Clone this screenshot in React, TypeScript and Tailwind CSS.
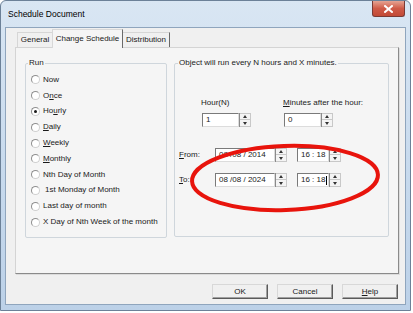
import React from "react";

const FONT = "font-['Liberation_Sans',Arial,sans-serif]";

function U({ children }: { children: React.ReactNode }) {
  return <span className="underline underline-offset-[1px]">{children}</span>;
}

function Radio({ checked, children, extra }: { checked?: boolean; children: React.ReactNode; extra?: string }) {
  return (
    <div className="flex h-[15.8px] items-center">
      <div className="relative ml-[5px] flex h-[9px] w-[9px] items-center justify-center rounded-full border border-[#8f8f8f] border-r-[#d0d0d0] border-b-[#d0d0d0] bg-white">
        {checked && <div className="h-[3px] w-[3px] rounded-full bg-[#1a1a1a]" />}
      </div>
      <span className={"ml-[3px] " + (extra ?? "")}>{children}</span>
    </div>
  );
}

function Spinner() {
  return (
    <div className="flex h-[14px] w-[12px] flex-col border-l border-[#8a8a8a]">
      <div className="flex h-[7px] items-center justify-center border border-[#c8c8c8] border-l-0 bg-[#f4f4f4]">
        <svg width="4" height="3" viewBox="0 0 4 3"><path d="M0 3 L2 0 L4 3 Z" fill="#333" /></svg>
      </div>
      <div className="flex h-[7px] items-center justify-center border border-t-0 border-l-0 border-[#c8c8c8] bg-[#f4f4f4]">
        <svg width="4" height="3" viewBox="0 0 4 3"><path d="M0 0 L2 3 L4 0 Z" fill="#333" /></svg>
      </div>
    </div>
  );
}

function Field({ w, value, caret }: { w: string; value: string; caret?: boolean }) {
  return (
    <div className="flex items-center">
      <div className={"flex h-[14px] items-center border border-[#7a7a7a] border-r-[#dcdcdc] border-b-[#dcdcdc] bg-white pl-[3px] " + w}>
        <span className="whitespace-pre leading-none">{value}</span>
        {caret && <span className="ml-[1px] h-[9px] w-[1px] bg-black" />}
      </div>
      <Spinner />
    </div>
  );
}

function Btn({ children }: { children: React.ReactNode }) {
  return (
    <div className="flex h-[15px] w-[56px] items-center justify-center border border-[#d8d8d8] border-r-[#5a5a5a] border-b-[#5a5a5a] bg-[#f0f0f0] shadow-[inset_-1px_-1px_0_#a0a0a0]">
      {children}
    </div>
  );
}

export default function App() {
  return (
    <div className={"relative h-[313px] w-[413px] bg-white text-[8px] text-[#1a1a1a] " + FONT}>
      <div className="flex h-[311px] w-[411px] flex-col rounded-t-[6px] border border-[#6c8198] bg-gradient-to-b from-[#d9e6f3] via-[#c9dbee] to-[#bcd1e8]">
        {/* Title bar */}
        <div className="flex h-[26px] items-start">
          <span className="ml-[7px] mt-[7px] text-[8.5px] text-black">Schedule Document</span>
          <div className="ml-auto mr-[5px] flex h-[16px] w-[33px] items-center justify-center rounded-b-[3px] border border-t-0 border-[#7a3a34] bg-gradient-to-b from-[#e4a393] via-[#cf5a47] to-[#c24a36]">
            <svg width="9" height="8" viewBox="0 0 9 8">
              <path d="M1 1 L8 7 M8 1 L1 7" stroke="#ffffff" strokeWidth="2" strokeLinecap="square" />
            </svg>
          </div>
        </div>
        {/* Client */}
        <div className="mx-[4px] flex flex-1 flex-col border border-[#8fa5bd] bg-[#f0f0f0] pl-[9px] pr-[6px] pt-[1px]">
          {/* Tabs */}
          <div className="flex h-[18px] items-end pl-[2px]">
            <div className="flex h-[15px] w-[35px] items-center justify-center border border-b-0 border-[#d6d6d6] border-r-0 bg-[#f0f0f0]">General</div>
            <div className="relative z-10 -mb-[1px] flex h-[19px] w-[71px] items-center justify-center border border-b-0 border-[#d8d8d8] border-r-[#6a6a6a] bg-[#f5f5f5]">Change Schedule</div>
            <div className="flex h-[15px] w-[47px] items-center justify-center border border-b-0 border-l-0 border-[#d6d6d6] border-r-[#6a6a6a] bg-[#f0f0f0]">Distribution</div>
          </div>
          {/* Panel */}
          <div className="flex h-[227px] gap-[7px] border border-[#d4d4d4] border-r-[#8a8a8a] border-b-[#8a8a8a] bg-[#f5f5f5] pl-[9px] pt-[10px] shadow-[1px_1px_0_#dcdcdc]">
            <fieldset className="h-[180px] w-[142px] rounded-[2px] border border-[#cfd6dc] pl-[0px]">
              <legend className="ml-[2px] px-[1px] leading-[10px]">Run</legend>
              <div className="flex flex-col pt-[4px]">
                <Radio>Now</Radio>
                <Radio>O<U>n</U>ce</Radio>
                <Radio checked>Ho<U>u</U>rly</Radio>
                <Radio><U>D</U>aily</Radio>
                <Radio><U>W</U>eekly</Radio>
                <Radio><U>M</U>onthly</Radio>
                <Radio>Nth Day of Month</Radio>
                <Radio extra="ml-[5px]">1st Monday of Month</Radio>
                <Radio>Last day of month</Radio>
                <Radio>X Day of Nth Week of the month</Radio>
              </div>
            </fieldset>
            <fieldset className="h-[179px] w-[215px] rounded-[2px] border border-[#cfd6dc]">
              <legend className="ml-[3px] px-[1px] leading-[10px]">Object will run every N hours and X minutes.</legend>
              <div className="flex pl-[26px] pt-[30px]">
                <div className="flex w-[82px] flex-col">
                  <span className="leading-[10px]">Hour(N)</span>
                  <div className="mt-[5px] ml-[1px]"><Field w="w-[37px]" value="1" /></div>
                </div>
                <div className="flex flex-col">
                  <span className="leading-[10px]"><U>M</U>inutes after the hour:</span>
                  <div className="mt-[5px] ml-[1px]"><Field w="w-[37px]" value="0" /></div>
                </div>
              </div>
              <div className="mt-[21px] flex items-center pl-[4px]">
                <span className="w-[36px]"><U>F</U>rom:</span>
                <Field w="w-[60px]" value="08 /08 / 2014" />
                <div className="ml-[10px]"><Field w="w-[32px]" value="16 : 18" /></div>
              </div>
              <div className="mt-[11px] flex items-center pl-[4px]">
                <span className="w-[36px]"><U>T</U>o:</span>
                <Field w="w-[60px]" value="08 /08 / 2024" />
                <div className="ml-[10px]"><Field w="w-[32px]" value="16 : 18" caret /></div>
              </div>
            </fieldset>
          </div>
          {/* Buttons */}
          <div className="mt-[10px] flex justify-end gap-[9px] pr-[1px]">
            <Btn>OK</Btn>
            <Btn>Cancel</Btn>
            <Btn><U>H</U>elp</Btn>
          </div>
        </div>
        <div className="h-[5px]" />
      </div>
      <svg className="pointer-events-none absolute left-0 top-0" width="413" height="313" viewBox="0 0 413 313">
        <ellipse cx="285" cy="178" rx="93" ry="32" transform="rotate(-2 285 178)" fill="none" stroke="#e8140c" strokeWidth="4" />
      </svg>
    </div>
  );
}
